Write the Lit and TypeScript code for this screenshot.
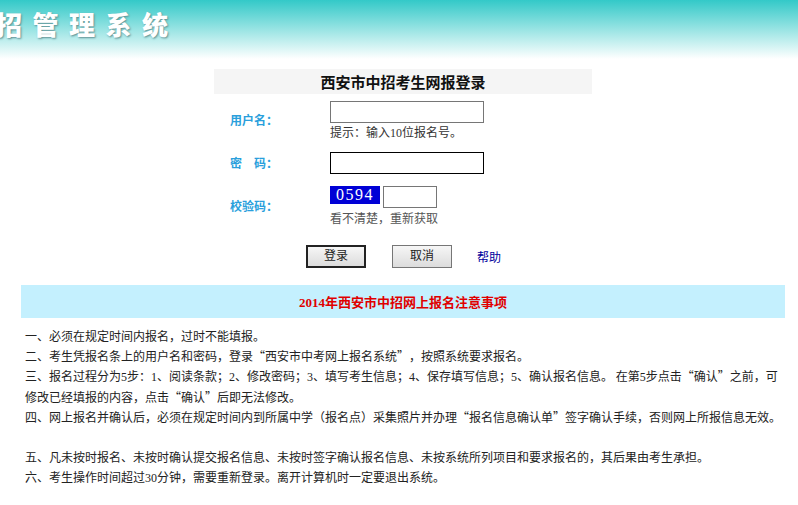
import { LitElement, html, css } from "lit";
import { customElement } from "lit/decorators.js";

const digits = (text: string) =>
  text.split(/(\d+)/).map((part, i) => (i % 2 ? html`<span class="num">${part}</span>` : part));

@customElement("app-root")
export class AppRoot extends LitElement {
  static styles = css`
    :host {
      display: block;
      width: 798px;
      height: 505px;
      overflow: hidden;
      background: #fff;
      color: #222;
      font: 12px/20px "Noto Sans CJK SC", sans-serif;
      text-spacing-trim: space-all;
    }
    .num { font-family: "Liberation Serif", serif; }
    .banner {
      height: 59px;
      background: linear-gradient(#33c9c8, #fff);
      box-sizing: border-box;
      padding-top: 6px;
      text-indent: -4px;
      font: 900 26px/36px "Noto Sans CJK SC", sans-serif;
      letter-spacing: 10.5px;
      color: #fff;
      text-shadow: 1px 1px 2px #5f8f92;
      overflow: hidden;
      white-space: nowrap;
    }
    .form {
      width: 378px;
      margin: 10px 0 0 214px;
    }
    .form-title {
      height: 25px;
      background: #f5f5f5;
      text-align: center;
      font: 700 15px/25px "Noto Sans CJK SC", sans-serif;
      color: #111;
    }
    .row {
      display: grid;
      grid-template-columns: 116px 1fr;
      align-items: center;
    }
    .r1 { margin-top: 7px; height: 41px; }
    .r2 { margin-top: 10px; height: 22px; }
    .r3 { margin-top: 12px; height: 40px; }
    .r1 .label { margin-bottom: 4px; }
    .r3 .label { margin-bottom: 2px; }
    .label {
      padding-left: 16px;
      color: #2a9fdc;
      font: 700 12px/16px "Noto Sans CJK SC", sans-serif;
      white-space: pre;
    }
    .field { display: flex; flex-direction: column; }
    input {
      box-sizing: border-box;
      margin: 0;
      padding: 0;
      background: #fff;
      border: 1px solid #767676;
      border-radius: 0;
      outline: none;
    }
    .text-input { width: 154px; height: 22px; }
    .focused { border-color: #000; }
    .hint { line-height: 18px; color: #333; }
    .captcha-line { display: flex; gap: 3px; align-items: flex-start; }
    .captcha {
      width: 50px;
      height: 18px;
      background: #0000d6;
      color: #fff;
      text-align: center;
      font: 400 16px/18px "Liberation Serif", serif;
      letter-spacing: 1.5px;
    }
    .code { width: 54px; height: 22px; }
    .captcha-hint { margin-top: 1px; color: #555; line-height: 18px; }
    .actions {
      display: flex;
      align-items: center;
      margin: 19px 0 0 92px;
      height: 23px;
    }
    .btn {
      box-sizing: border-box;
      width: 60px;
      height: 23px;
      padding: 0 0 4px;
      border: 1px solid #767676;
      background: linear-gradient(#f6f6f6, #dcdcdc);
      color: #222;
      font: 12px/16px "Noto Sans CJK SC", sans-serif;
    }
    .primary { border: 2px solid #222; }
    .btn + .btn { margin-left: 26px; }
    .help {
      margin-left: 25px;
      color: #00009c;
      text-decoration: none;
      font-size: 12px;
    }
    .notice-title {
      margin: 17px 13px 0 21px;
      height: 33px;
      background: #c4f0fe;
      text-align: center;
      color: #e00000;
      font: 700 13px/33px "Noto Sans CJK SC", sans-serif;
    }
    .notes {
      margin: 8px 13px 0 25px;
      color: #222;
    }
    .notes p { margin: 0; }
    .gap { height: 20px; }
  `;

  render() {
    return html`
      <div class="banner">招管理系统</div>
      <div class="form">
        <div class="form-title">西安市中招考生网报登录</div>
        <div class="row r1">
          <div class="label">用户名：</div>
          <div class="field">
            <input class="text-input" type="text" />
            <div class="hint">${digits("提示：输入10位报名号。")}</div>
          </div>
        </div>
        <div class="row r2">
          <div class="label">密${"\u3000"}码：</div>
          <div class="field"><input class="text-input focused" type="password" /></div>
        </div>
        <div class="row r3">
          <div class="label">校验码：</div>
          <div class="field">
            <div class="captcha-line">
              <div class="captcha">0594</div>
              <input class="code" type="text" />
            </div>
            <div class="captcha-hint">看不清楚，重新获取</div>
          </div>
        </div>
        <div class="actions">
          <button class="btn primary">登录</button>
          <button class="btn">取消</button>
          <a class="help" href="#">帮助</a>
        </div>
      </div>
      <div class="notice-title">${digits("2014年西安市中招网上报名注意事项")}</div>
      <div class="notes">
        <p>一、必须在规定时间内报名，过时不能填报。</p>
        <p>二、考生凭报名条上的用户名和密码，登录“西安市中考网上报名系统”，按照系统要求报名。</p>
        <p>${digits("三、报名过程分为5步：1、阅读条款；2、修改密码；3、填写考生信息；4、保存填写信息；5、确认报名信息。 在第5步点击“确认”之前，可修改已经填报的内容，点击“确认”后即无法修改。")}</p>
        <p>四、网上报名并确认后，必须在规定时间内到所属中学（报名点）采集照片并办理“报名信息确认单”签字确认手续，否则网上所报信息无效。</p>
        <div class="gap"></div>
        <p>五、凡未按时报名、未按时确认提交报名信息、未按时签字确认报名信息、未按系统所列项目和要求报名的，其后果由考生承担。</p>
        <p>${digits("六、考生操作时间超过30分钟，需要重新登录。离开计算机时一定要退出系统。")}</p>
      </div>
    `;
  }
}
